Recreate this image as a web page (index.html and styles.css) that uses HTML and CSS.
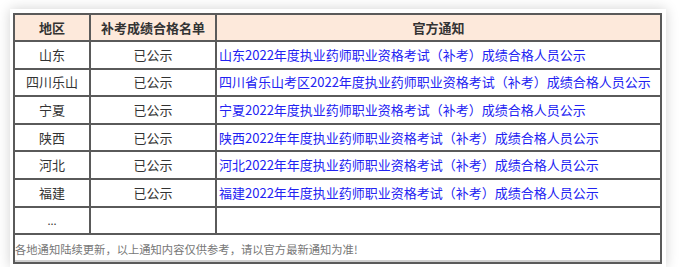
FILE: index.html
```html
<!DOCTYPE html>
<html lang="zh">
<head>
<meta charset="utf-8">
<link rel="stylesheet" href="styles.css">
</head>
<body>
<div class="card">
  <table class="notice">
    <colgroup>
      <col class="c1"><col class="c2"><col class="c3">
    </colgroup>
    <thead>
      <tr><th>地区</th><th>补考成绩合格名单</th><th>官方通知</th></tr>
    </thead>
    <tbody>
      <tr><td class="ctr">山东</td><td class="ctr">已公示</td><td><a href="#">山东2022年度执业药师职业资格考试（补考）成绩合格人员公示</a></td></tr>
      <tr><td class="ctr">四川乐山</td><td class="ctr">已公示</td><td><a href="#">四川省乐山考区2022年度执业药师职业资格考试（补考）成绩合格人员公示</a></td></tr>
      <tr><td class="ctr">宁夏</td><td class="ctr">已公示</td><td><a href="#">宁夏2022年度执业药师职业资格考试（补考）成绩合格人员公示</a></td></tr>
      <tr><td class="ctr">陕西</td><td class="ctr">已公示</td><td><a href="#">陕西2022年年度执业药师职业资格考试（补考）成绩合格人员公示</a></td></tr>
      <tr><td class="ctr">河北</td><td class="ctr">已公示</td><td><a href="#">河北2022年年度执业药师职业资格考试（补考）成绩合格人员公示</a></td></tr>
      <tr><td class="ctr">福建</td><td class="ctr">已公示</td><td><a href="#">福建2022年年度执业药师职业资格考试（补考）成绩合格人员公示</a></td></tr>
      <tr><td class="ctr dots">...</td><td></td><td></td></tr>
      <tr><td colspan="3" class="foot">各地通知陆续更新，以上通知内容仅供参考，请以官方最新通知为准!</td></tr>
    </tbody>
  </table>
</div>
</body>
</html>
```
FILE: styles.css
```css
html, body {
  margin: 0;
  padding: 0;
  background: #fff;
}
body {
  padding: 9px 0 0 10px;
  font-family: "Noto Sans CJK SC", "Noto Sans", sans-serif;
  color: #333;
}
.card {
  width: 656px;
  box-sizing: border-box;
  padding: 4px 4px 3px 3px;
  background: #fff;
  box-shadow: 0 0 12px rgba(0, 0, 0, 0.18);
}
.notice {
  width: 649px;
  border-collapse: collapse;
  table-layout: fixed;
  border: 2px solid #5a5a5a;
  font-size: 13px;
}
.c1 { width: 76px; }
.c2 { width: 126px; }
.notice th, .notice td {
  border: 2px solid #5a5a5a;
  height: 25.6px;
  padding: 0 2px;
  line-height: 18px;
  white-space: nowrap;
  overflow: hidden;
}
.notice th {
  background: #fde9db;
  font-weight: bold;
  color: #333;
  text-align: center;
  height: 25px;
}
.ctr { text-align: center; }
.notice a {
  color: #2222f2;
  text-decoration: none;
}
.dots { font-size: 11px; }
.notice td.foot {
  font-size: 11.3px;
  color: #777;
  padding: 0;
  height: 27px;
  box-shadow: inset 0 -2px 0 #cfcfcf;
}
```
